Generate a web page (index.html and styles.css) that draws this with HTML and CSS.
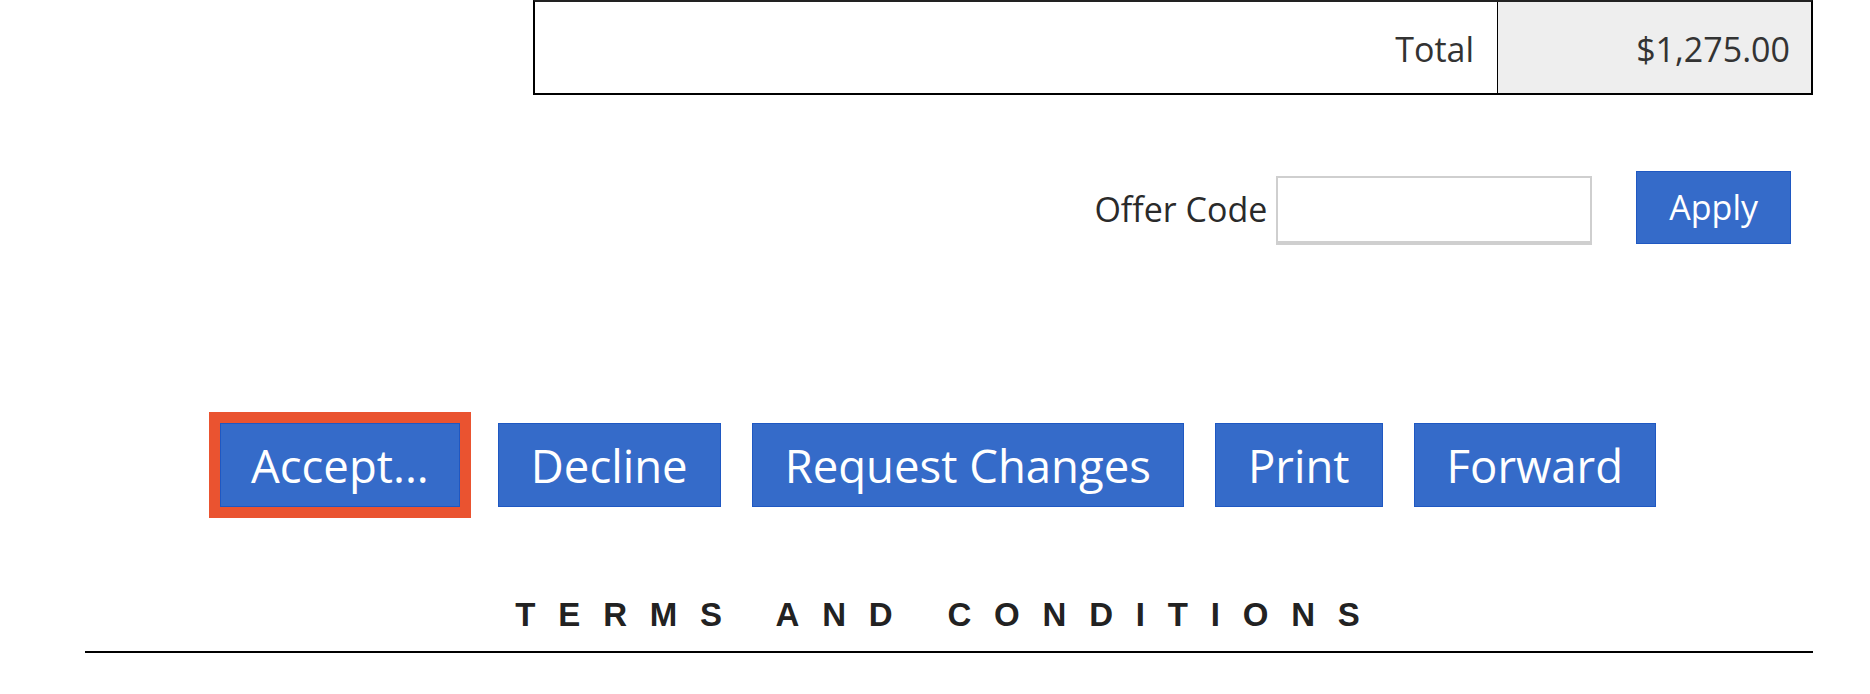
FILE: index.html
```html
<!DOCTYPE html>
<html lang="en">
<head>
<meta charset="utf-8">
<title>Proposal</title>
<link rel="stylesheet" href="styles.css">
</head>
<body>
<div class="page">
  <div class="totals">
    <div class="totals-label">Total</div>
    <div class="totals-value">$1,275.00</div>
  </div>

  <div class="offer">
    <label class="offer-label" for="offer">Offer Code</label>
    <input class="offer-input" id="offer" type="text">
    <button class="btn btn-small" type="button">Apply</button>
  </div>

  <div class="actions">
    <button class="btn btn-focus" type="button">Accept...</button>
    <button class="btn" type="button">Decline</button>
    <button class="btn" type="button">Request Changes</button>
    <button class="btn" type="button">Print</button>
    <button class="btn" type="button">Forward</button>
  </div>

  <div class="terms">
    <h2 class="terms-title">TERMS AND CONDITIONS</h2>
    <div class="terms-rule"></div>
  </div>
</div>
</body>
</html>
```

FILE: styles.css
```css
html, body {
  margin: 0;
  padding: 0;
  background: #fff;
}

body {
  font-family: "Open Sans", "Noto Sans", sans-serif;
  color: #333;
}

.page {
  width: 1870px;
}

.totals {
  margin-left: 533px;
  width: 1280px;
  height: 95px;
  box-sizing: border-box;
  border: 2px solid #000;
  border-top-color: #222;
  display: grid;
  grid-template-columns: 1fr 313px;
  font-size: 34px;
}

.totals-label,
.totals-value {
  display: flex;
  align-items: center;
  justify-content: flex-end;
  padding-top: 3px;
}

.totals-label {
  padding-right: 23px;
  border-right: 1px solid #000;
}

.totals-value {
  background: #eee;
  padding-right: 21px;
}

.offer {
  margin-top: 76px;
  display: flex;
  justify-content: flex-end;
  align-items: center;
  padding-right: 79px;
  height: 73px;
}

.offer-label {
  font-size: 34px;
  color: #2a2a2a;
  margin-right: 9px;
  margin-top: 2px;
}

.offer-input {
  box-sizing: border-box;
  width: 316px;
  height: 69px;
  margin: 5px 44px 0 0;
  border: 2px solid #cfcfcf;
  border-bottom-width: 4px;
  background: #fff;
  font-family: inherit;
  font-size: 30px;
  padding: 0 10px;
  outline: none;
}

.btn {
  font-family: "Open Sans", "Noto Sans", sans-serif;
  font-size: 45.5px;
  line-height: 60px;
  color: #fff;
  background: #356bc9;
  border: 1px solid #1f58c2;
  padding: 11px 32px;
  margin: 0;
  border-radius: 0;
  cursor: pointer;
  white-space: nowrap;
}

.btn-small {
  font-size: 34px;
  line-height: 47px;
  padding: 12px 32px;
}

.actions {
  margin: 179px 57px 0 85px;
  padding-right: 22px;
  display: flex;
  justify-content: center;
  gap: 31px;
}

.btn-focus {
  padding-left: 30px;
  padding-right: 30px;
  outline: 11px solid #ea5330;
  outline-offset: 0;
  margin-right: 7px;
}

.terms {
  margin: 89px 57px 0 85px;
}

.terms-title {
  margin: 0;
  font-family: "Liberation Sans", Arial, sans-serif;
  font-weight: bold;
  font-size: 33px;
  line-height: 38px;
  letter-spacing: 22.8px;
  text-align: center;
  color: #222;
}

.terms-rule {
  margin-top: 17px;
  height: 2px;
  background: #000;
}
```
